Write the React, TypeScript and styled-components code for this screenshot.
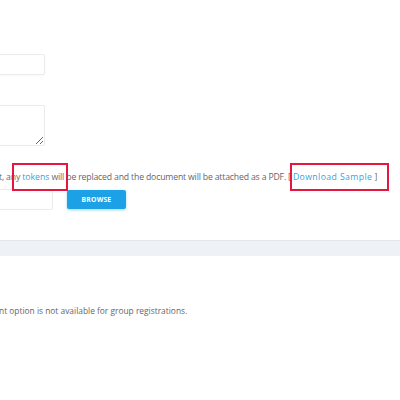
import styled, { createGlobalStyle } from 'styled-components';

const Global = createGlobalStyle`
  html, body {
    margin: 0;
    padding: 0;
    background: #fff;
    overflow: hidden;
  }
  body {
    font-family: "Open Sans", "Liberation Sans", sans-serif;
    color: #555;
  }
`;

const Page = styled.div`
  width: 400px;
  height: 400px;
  display: flex;
  flex-direction: column;
`;

const Section = styled.section`
  display: flex;
  flex-direction: column;
  flex-shrink: 0;
  margin-left: -100px;
  padding-top: 54px;
  height: 240px;
  box-sizing: border-box;
  & > * {
    flex-shrink: 0;
  }
`;

const TextInput = styled.input`
  box-sizing: border-box;
  width: 145px;
  height: 21px;
  border: 1px solid #ebebeb;
  border-radius: 2px;
  box-shadow: 0 1px 2px rgba(0, 0, 0, 0.03);
  outline: none;
`;

const TextArea = styled.textarea`
  box-sizing: border-box;
  width: 145px;
  height: 41px;
  margin-top: 30px;
  border: 1px solid #ebebeb;
  border-radius: 2px;
  resize: vertical;
  outline: none;
  display: block;
`;

const Help = styled.p`
  margin: 25px 0 0 99px;
  font-size: 8.7px;
  line-height: 13px;
  letter-spacing: -0.17px;
  color: #666;
  white-space: nowrap;
`;

const Link = styled.a<{ $spread?: boolean }>`
  position: relative;
  color: #3a9fe0;
  text-decoration: none;
  letter-spacing: ${p => (p.$spread ? '0.4px' : 'normal')};
`;

const Highlight = styled.span<{ $left: number; $right: number }>`
  position: absolute;
  top: -8px;
  bottom: -8px;
  left: ${p => -p.$left}px;
  right: ${p => -p.$right}px;
  border: 2px solid #e5173f;
  pointer-events: none;
`;

const FileRow = styled.div`
  display: flex;
  align-items: center;
  gap: 14px;
  margin-top: 5px;
`;

const FileInput = styled.div`
  box-sizing: border-box;
  width: 153px;
  height: 21px;
  border: 1px solid #ebebeb;
  border-radius: 2px;
`;

const Browse = styled.button`
  width: 59px;
  height: 19px;
  border: none;
  border-radius: 2px;
  background: #1da1e6;
  color: #fff;
  font-family: "Open Sans", "Liberation Sans", sans-serif;
  font-weight: 700;
  font-size: 6.8px;
  letter-spacing: 0.2px;
  box-shadow: 0 1px 3px rgba(29, 161, 230, 0.45);
  padding: 0;
`;

const Band = styled.div`
  flex-shrink: 0;
  height: 16px;
  background: #eef1f6;
  border-top: 1px solid #e3e6eb;
  box-sizing: border-box;
`;

const Note = styled.p`
  margin: 48px 0 0 -1px;
  font-size: 8.4px;
  line-height: 13px;
  color: #666;
  white-space: nowrap;
`;

export default function App() {
  return (
    <Page>
      <Global />
      <Section>
        <TextInput />
        <TextArea />
        <Help>
          t, any{' '}
          <Link href="#">
            tokens
            <Highlight $left={10} $right={19} />
          </Link>{' '}
          will be replaced and the document will be attached as a PDF. [{' '}
          <Link href="#" $spread>
            Download Sample
            <Highlight $left={3} $right={17} />
          </Link>{' '}
          ]
        </Help>
        <FileRow>
          <FileInput />
          <Browse>BROWSE</Browse>
        </FileRow>
      </Section>
      <Band />
      <Note>nt option is not available for group registrations.</Note>
    </Page>
  );
}
